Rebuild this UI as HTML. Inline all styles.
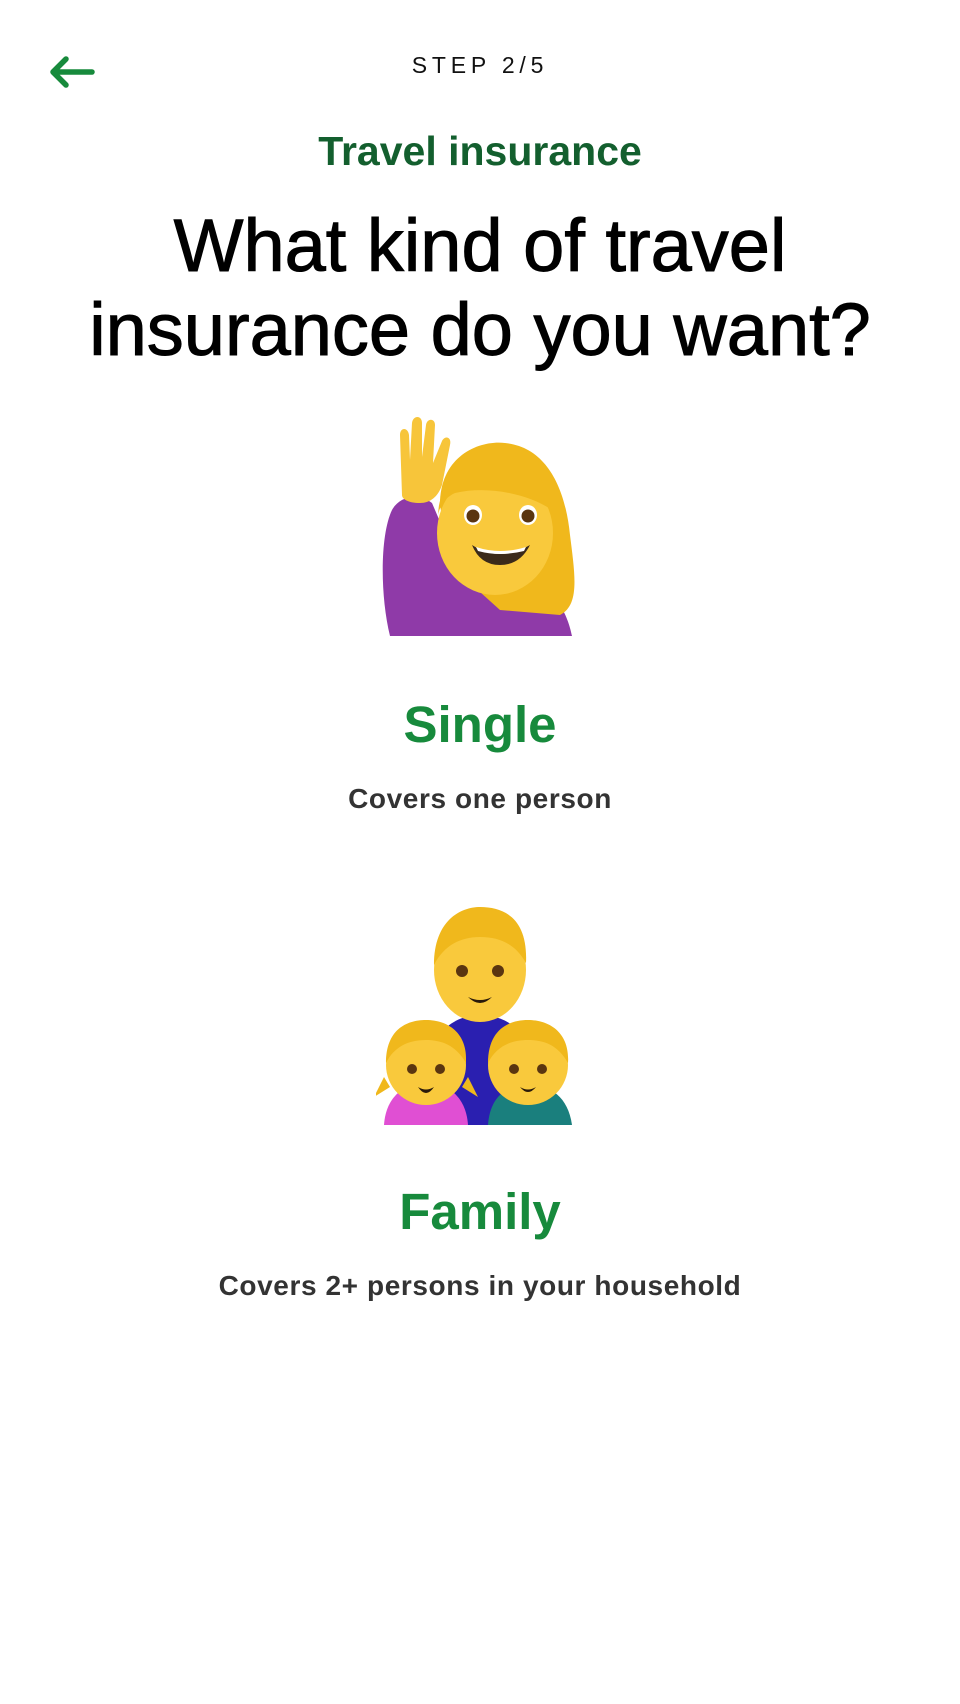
<!DOCTYPE html>
<html><head><meta charset="utf-8"><style>
html,body{margin:0;padding:0;background:#fff;width:960px;height:1704px;overflow:hidden}
body{font-family:"Liberation Sans",sans-serif;position:relative}
.t{position:absolute;left:0;width:960px;text-align:center;white-space:nowrap}
</style></head><body>
<svg style="position:absolute;left:0;top:0" width="120" height="120"><path d="M92 72H53M66 59L53 72L66 85" fill="none" stroke="#178a3c" stroke-width="5.5" stroke-linecap="round" stroke-linejoin="round"/></svg>
<div class="t" style="top:52px;font-size:23px;letter-spacing:4.8px;color:#111">STEP 2/5</div>
<div class="t" style="top:128px;font-size:41px;font-weight:bold;color:#135f2e">Travel insurance</div>
<div class="t" style="top:204px;font-size:74px;line-height:84px;color:#000;-webkit-text-stroke:1px #000">What kind of travel<br>insurance do you want?</div>

<svg style="position:absolute;left:380px;top:415px" width="200" height="222" viewBox="0 0 200 222">
<path d="M10 221 C0 180 0 120 12 95 C20 80 40 78 52 88 L70 130 C80 150 110 170 150 170 C175 172 188 200 192 221Z" fill="#8f3aa8"/>
<path d="M22 80 L20 20 C20 12 28 12 29 20 L30 45 L32 8 C33 0 42 0 42 8 L42 42 L46 10 C47 3 55 3 55 10 L53 48 L62 26 C65 20 72 22 70 30 L62 70 C58 82 50 88 40 88 C28 88 22 84 22 80Z" fill="#f7c53a"/>
<path d="M60 90 C60 40 100 25 125 28 C165 32 185 70 190 120 C195 160 200 190 180 200 L120 195 L70 150Z" fill="#f0b81c"/>
<ellipse cx="115" cy="118" rx="58" ry="62" fill="#f9c93c"/>
<path d="M58 100 C60 60 90 45 120 45 C150 45 168 65 172 95 C150 80 110 70 75 78 C66 82 60 90 58 100Z" fill="#f0b81c"/>
<ellipse cx="93" cy="100" rx="9" ry="10" fill="#fff"/><circle cx="93" cy="101" r="6.5" fill="#5a3510"/>
<ellipse cx="148" cy="100" rx="9" ry="10" fill="#fff"/><circle cx="148" cy="101" r="6.5" fill="#5a3510"/>
<path d="M92 130 Q120 148 150 130 Q140 150 120 150 Q100 150 92 130Z" fill="#3b2a1a"/>
<path d="M96 132 Q120 140 146 132 L144 136 Q120 142 98 136Z" fill="#fff"/>
</svg>

<div class="t" style="top:695px;font-size:51px;font-weight:bold;color:#178a3c">Single</div>
<div class="t" style="top:783px;font-size:28px;font-weight:bold;color:#333;letter-spacing:0.6px">Covers one person</div>

<svg style="position:absolute;left:376px;top:905px" width="205" height="220" viewBox="0 0 205 220">
<path d="M40 220 C40 140 70 110 104 110 C140 110 170 140 170 220Z" fill="#2a1fb0"/>
<ellipse cx="104" cy="65" rx="46" ry="52" fill="#f9c93c"/>
<path d="M58 60 C58 15 85 2 104 2 C130 2 152 15 150 58 C140 40 125 32 104 32 C85 32 68 40 58 60Z" fill="#f0b81c"/>
<circle cx="86" cy="66" r="6" fill="#5a3510"/><circle cx="122" cy="66" r="6" fill="#5a3510"/>
<path d="M92 92 Q104 98 116 92 Q104 104 92 92Z" fill="#2a1a0a"/>
<path d="M8 220 C10 190 30 178 50 178 C70 178 90 190 92 220Z" fill="#e04fd3"/>
<ellipse cx="50" cy="160" rx="40" ry="40" fill="#f9c93c"/>
<path d="M10 158 C10 125 30 115 50 115 C72 115 92 128 90 158 C80 140 65 135 50 135 C32 135 18 142 10 158Z" fill="#f0b81c"/>
<path d="M8 172 L-2 192 L14 182Z M92 172 L102 192 L86 182Z" fill="#f0b81c"/>
<circle cx="36" cy="164" r="5" fill="#5a3510"/><circle cx="64" cy="164" r="5" fill="#5a3510"/>
<path d="M42 182 Q50 187 58 182 Q50 194 42 182Z" fill="#2a1a0a"/>
<path d="M112 220 C114 192 130 180 152 180 C175 180 192 192 196 220Z" fill="#1a7f7d"/>
<ellipse cx="152" cy="160" rx="40" ry="40" fill="#f9c93c"/>
<path d="M112 158 C112 125 132 115 152 115 C174 115 194 128 192 158 C182 140 168 135 152 135 C134 135 120 142 112 158Z" fill="#f0b81c"/>
<circle cx="138" cy="164" r="5" fill="#5a3510"/><circle cx="166" cy="164" r="5" fill="#5a3510"/>
<path d="M144 182 Q152 187 160 182 Q152 192 144 182Z" fill="#2a1a0a"/>
</svg>

<div class="t" style="top:1182px;font-size:51px;font-weight:bold;color:#178a3c">Family</div>
<div class="t" style="top:1270px;font-size:28px;font-weight:bold;color:#333;letter-spacing:0.6px">Covers 2+ persons in your household</div>
</body></html>
